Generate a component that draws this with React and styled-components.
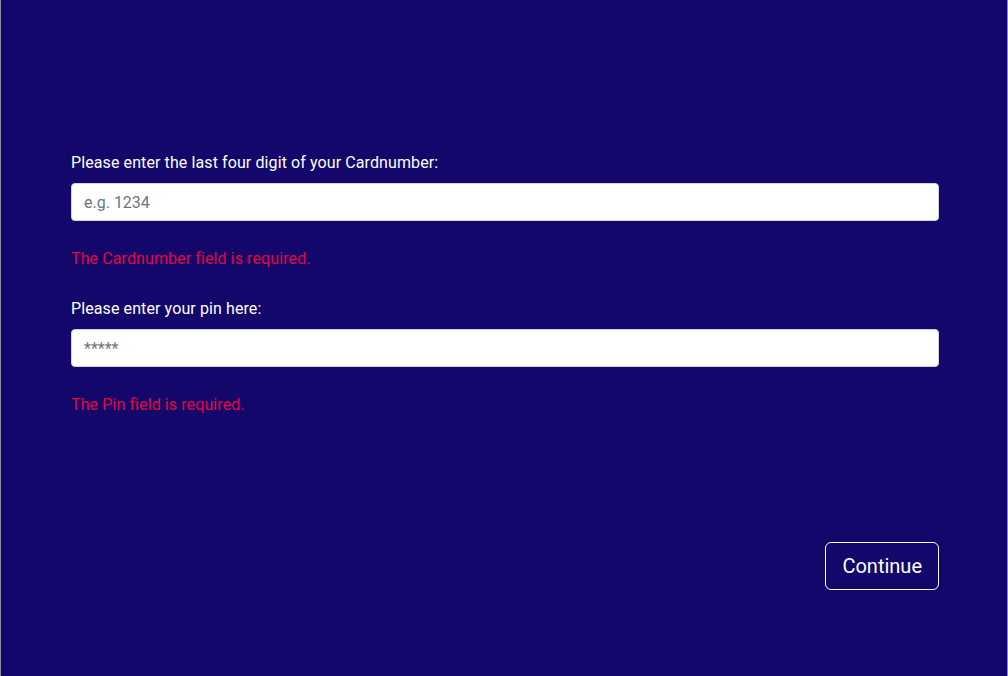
import React from "react";
import styled, { createGlobalStyle } from "styled-components";

const Global = createGlobalStyle`
  html, body { margin: 0; padding: 0; background: #13076b; }
  body { font-family: Roboto, "Noto Sans", "Liberation Sans", sans-serif; }
  * { box-sizing: border-box; }
`;

const Page = styled.div`
  height: 676px;
  background: #13076b;
  border-left: 1px solid #8a8aa6;
  border-right: 1px solid #8a8aa6;
  padding: 151px 68px 0 70px;
  display: flex;
  flex-direction: column;
`;

const Group = styled.div`
  display: flex;
  flex-direction: column;
  margin-bottom: ${(p) => p.$mb || 0}px;
`;

const Label = styled.label`
  color: #ffffff;
  font-size: 16px;
  line-height: 24px;
  margin-bottom: 8px;
  letter-spacing: 0.1px;
`;

const Input = styled.input`
  width: 100%;
  height: 38px;
  border: 1px solid #ced4da;
  border-radius: 4px;
  background: #fff;
  padding: 6px 12px;
  font-family: inherit;
  font-size: 16px;
  color: #495057;
  outline: none;
  &::placeholder { color: #6c757d; }
`;

const Error = styled.div`
  color: #e4063f;
  font-size: 16px;
  line-height: 24px;
  margin-top: 26px;
  letter-spacing: 0.1px;
`;

const Actions = styled.div`
  display: flex;
  justify-content: flex-end;
  margin-top: 125px;
`;

const Button = styled.button`
  background: transparent;
  color: #fff;
  border: 1px solid #fff;
  border-radius: 6px;
  height: 48px;
  padding: 0 16px;
  font-family: inherit;
  font-size: 20px;
  line-height: 30px;
  cursor: pointer;
`;

export default function App() {
  return (
    <>
      <Global />
      <Page>
        <Group $mb={26}>
          <Label>Please enter the last four digit of your Cardnumber:</Label>
          <Input placeholder="e.g. 1234" />
          <Error>The Cardnumber field is required.</Error>
        </Group>
        <Group>
          <Label>Please enter your pin here:</Label>
          <Input type="password" placeholder="*****" />
          <Error>The Pin field is required.</Error>
        </Group>
        <Actions>
          <Button>Continue</Button>
        </Actions>
      </Page>
    </>
  );
}
